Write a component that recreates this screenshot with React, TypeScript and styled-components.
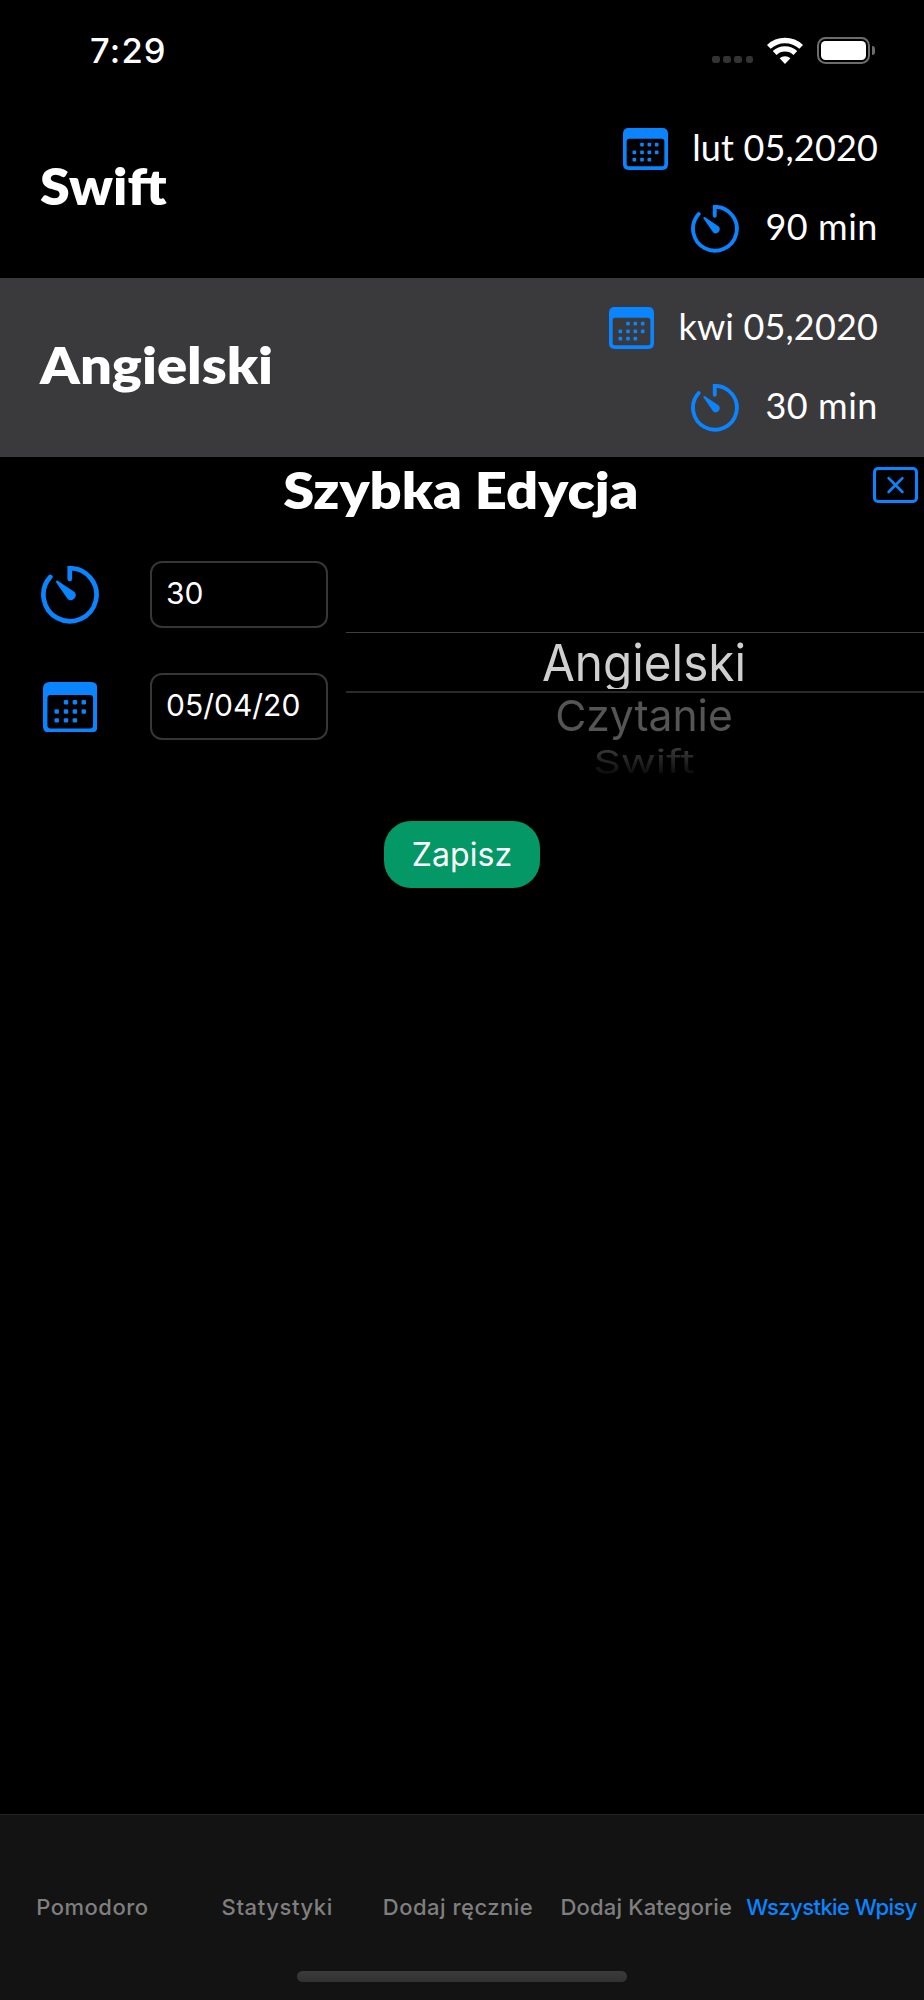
import React from "react";
import styled, { createGlobalStyle } from "styled-components";

const BLUE = "#0a84ff";
const SYSTEM = `Inter, "Liberation Sans", sans-serif`;
const ROUNDED = `Lato, "Liberation Sans", sans-serif`;

const GlobalStyle = createGlobalStyle`
  *, *::before, *::after { box-sizing: border-box; }
  body { margin: 0; background: #000; color: #fff; }
`;

const Screen = styled.div`
  width: 924px;
  height: 2000px;
  display: flex;
  flex-direction: column;
  overflow: hidden;
  background: #000;
  font-family: ${SYSTEM};
`;

const StatusBar = styled.header`
  flex: none;
  height: 99px;
  padding: 0 49px 0 90px;
  display: flex;
  justify-content: space-between;
  align-items: flex-start;
`;

const Clock = styled.time`
  margin-top: 30px;
  font-size: 34.5px;
  font-weight: 500;
  line-height: 41px;
  letter-spacing: 1.2px;
`;

const StatusIcons = styled.div`
  margin-top: 37px;
  height: 27px;
  display: flex;
  align-items: flex-end;
`;

const Signal = styled.div`
  display: flex;
  gap: 3.6px;
  margin: 0 13.5px 1px 0;
`;

const SignalDot = styled.i`
  width: 7.5px;
  height: 7.5px;
  border-radius: 2.4px;
  background: #333;
`;

const Battery = styled.div`
  width: 53px;
  height: 27px;
  margin-left: 14px;
  padding: 2px;
  border: 2px solid #6c6c6c;
  border-radius: 8.5px;
`;

const BatteryLevel = styled.div`
  height: 100%;
  border-radius: 4.5px;
  background: #fff;
`;

const BatteryNub = styled.div`
  align-self: center;
  width: 3px;
  height: 9px;
  margin-left: 2.5px;
  border-radius: 0 4px 4px 0;
  background: #6c6c6c;
`;

const Entry = styled.section<{ $selected?: boolean }>`
  flex: none;
  height: 179px;
  padding: 0 46px 0 40px;
  display: flex;
  justify-content: space-between;
  background: ${(p) => (p.$selected ? "#3a3a3c" : "#000")};
`;

const Heading = styled.h2<{ $stretch: number; $origin?: string }>`
  margin: 0;
  font: 800 51px/60px ${ROUNDED};
  white-space: nowrap;
  transform: scaleX(${(p) => p.$stretch});
  transform-origin: ${(p) => p.$origin ?? "left"} center;
`;

const EntryTitle = styled(Heading)`
  align-self: center;
  margin-bottom: 6px;
`;

const EntryDetails = styled.div`
  padding-top: 26px;
  display: flex;
  flex-direction: column;
  gap: 35px;
`;

const Detail = styled.div<{ $gap: number; $drop: number; $tracking: number }>`
  height: 44px;
  display: flex;
  justify-content: flex-end;
  align-items: flex-start;
  gap: ${(p) => p.$gap}px;
  font: 400 36px/44px ${ROUNDED};
  letter-spacing: ${(p) => p.$tracking}px;
  white-space: nowrap;

  svg { margin-top: ${(p) => p.$drop}px; }
`;

const EditorHeader = styled.div`
  flex: none;
  height: 104px;
  padding: 3px 6px 0 4px;
  display: grid;
  grid-template-columns: 45px 1fr 45px;
  justify-items: center;
  align-items: start;
`;

const CloseButton = styled.button`
  margin: 6.5px 0 0;
  padding: 0;
  border: 0;
  background: none;
  line-height: 0;
`;

const EditorBody = styled.div`
  flex: none;
  height: 260px;
  display: flex;
`;

const Fields = styled.div`
  flex: none;
  width: 346px;
  display: flex;
  flex-direction: column;
  gap: 45px;
`;

const Field = styled.label`
  height: 67px;
  padding-left: 41px;
  display: grid;
  grid-template-columns: 57.5px 178px;
  column-gap: 51.5px;
  align-items: center;
  justify-items: center;

  svg { margin-top: 1px; }
`;

const FieldInput = styled.input`
  width: 178px;
  height: 67px;
  padding: 0 14px 3px;
  border: 2px solid #363638;
  border-radius: 12px;
  outline: none;
  background: #000;
  color: #fff;
  font: 400 30px ${SYSTEM};
`;

const PickerClip = styled.div`
  flex: 1;
  min-width: 0;
  overflow: hidden;
`;

const Picker = styled.div`
  width: 596px;
  padding-top: 71px;
  text-align: center;
  white-space: nowrap;
`;

const PickerWindow = styled.div`
  height: 61px;
  border-top: 1px solid #3e3e3e;
  border-bottom: 2px solid #2a2a2a;
`;

const PickerSelected = styled.div`
  height: 56px;
  overflow: hidden;
  font-size: 51px;
  line-height: 59px;
  color: #cfcfcf;
  transform: scaleX(0.935);
`;

const PickerNext = styled.div`
  font-size: 43px;
  line-height: 45px;
  color: #555;
  transform: scaleX(0.99);
`;

const PickerLast = styled.div`
  margin-top: 1px;
  font-size: 43px;
  line-height: 44px;
  transform: scale(0.995, 0.74);
  color: transparent;
  background: linear-gradient(#3a3a3a 10%, #0c0c0c 90%);
  background-clip: text;
  -webkit-background-clip: text;
`;

const SaveButton = styled.button`
  flex: none;
  align-self: center;
  width: 156px;
  height: 67px;
  padding: 0;
  border: 0;
  border-radius: 27px;
  background: #039865;
  color: #fff;
  font: 400 32px ${SYSTEM};
  letter-spacing: 0.1px;
`;

const TabBar = styled.footer`
  flex: none;
  height: 186px;
  margin-top: auto;
  padding-top: 77px;
  border-top: 1px solid #242424;
  background: #131313;
  display: flex;
  flex-direction: column;
  align-items: center;
`;

const Tabs = styled.nav`
  width: 100%;
  display: grid;
  grid-template-columns: repeat(5, 1fr);
`;

const Tab = styled.span<{ $active?: boolean; $tracking: number; $inset?: number }>`
  padding-right: ${(p) => p.$inset ?? 0}px;
  text-align: center;
  white-space: nowrap;
  font-size: 22px;
  font-weight: 500;
  line-height: 30px;
  letter-spacing: ${(p) => p.$tracking}px;
  color: ${(p) => (p.$active ? BLUE : "#7f7f7f")};
`;

const HomeIndicator = styled.div`
  width: 330px;
  height: 11px;
  margin-top: 49px;
  border-radius: 6px;
  background: linear-gradient(#3b3b3b, #313131);
`;

const WifiIcon = () => (
  <svg width="36" height="27" viewBox="0 0 36 27" fill="none" stroke="#fff" strokeWidth="5.4">
    <path d="M1.8 9.9A23.6 23.6 0 0 1 34.2 9.9" />
    <path d="M7.6 16.05A15.1 15.1 0 0 1 28.4 16.05" />
    <path d="M12.6 21.35A7.8 7.8 0 0 1 23.4 21.35L18 26.9Z" fill="#fff" stroke="none" />
  </svg>
);

const TimerIcon = ({ size }: { size: number }) => (
  <svg width={size} height={size} viewBox="0 0 142 142" fill="none">
    <path
      d="M71 32V5.5A65.5 65.5 0 1 1 23 27"
      stroke={BLUE}
      strokeWidth="11.5"
      strokeLinecap="round"
      strokeLinejoin="miter"
    />
    <path d="M42.1 36.8L82.7 64.5A12 12 0 0 1 66.5 82L37.9 41.2A3 3 0 0 1 42.1 36.8Z" fill={BLUE} />
  </svg>
);

const DOTS: [number, number][] = [
  [57, 50], [79, 50], [101, 50],
  [34, 73], [57, 73], [79, 73], [101, 73],
  [34, 95], [57, 95], [79, 95],
];

const CalendarIcon = ({ width }: { width: number }) => (
  <svg width={width} height={(width * 126) / 135} viewBox="0 0 135 126" fill={BLUE}>
    <path
      fillRule="evenodd"
      d="M17 0H118Q135 0 135 17V109Q135 126 118 126H17Q0 126 0 109V17Q0 0 17 0ZM19 32Q11 32 11 40V107Q11 115 19 115H116Q124 115 124 107V40Q124 32 116 32Z"
    />
    {DOTS.map(([x, y]) => (
      <rect key={`${x}-${y}`} x={x - 5.5} y={y - 5.5} width="11" height="11" rx="3" />
    ))}
  </svg>
);

const CloseIcon = () => (
  <svg width="45" height="36" viewBox="0 0 45 36" fill="none" stroke={BLUE} strokeWidth="3">
    <rect x="1.5" y="1.5" width="42" height="33" rx="3.5" />
    <path d="M15.6 11.2L29.4 25M29.4 11.2L15.6 25" strokeWidth="2.6" strokeLinecap="round" />
  </svg>
);

const entries = [
  { title: "Swift", stretch: 1.055, date: "lut 05,2020", tracking: 0.15, duration: "90 min", selected: false },
  { title: "Angielski", stretch: 1.1, date: "kwi 05,2020", tracking: 0.15, duration: "30 min", selected: true },
];

const tabs = [
  { label: "Pomodoro", tracking: 0.49 },
  { label: "Statystyki", tracking: 0.59 },
  { label: "Dodaj ręcznie", tracking: 0.49, inset: 8 },
  { label: "Dodaj Kategorie", tracking: 0.2, inset: 1 },
  { label: "Wszystkie Wpisy", tracking: -0.57, active: true },
];

export default function App() {
  return (
    <Screen>
      <GlobalStyle />
      <StatusBar>
        <Clock>7:29</Clock>
        <StatusIcons>
          <Signal>
            <SignalDot />
            <SignalDot />
            <SignalDot />
            <SignalDot />
          </Signal>
          <WifiIcon />
          <Battery>
            <BatteryLevel />
          </Battery>
          <BatteryNub />
        </StatusIcons>
      </StatusBar>

      {entries.map((e) => (
        <Entry key={e.title} $selected={e.selected}>
          <EntryTitle $stretch={e.stretch}>{e.title}</EntryTitle>
          <EntryDetails>
            <Detail $gap={24} $drop={3} $tracking={e.tracking}>
              <CalendarIcon width={45} />
              <span>{e.date}</span>
            </Detail>
            <Detail $gap={26.5} $drop={1} $tracking={0.55}>
              <TimerIcon size={47.5} />
              <span>{e.duration}</span>
            </Detail>
          </EntryDetails>
        </Entry>
      ))}

      <EditorHeader>
        <span />
        <Heading $stretch={1.098} $origin="center">Szybka Edycja</Heading>
        <CloseButton aria-label="Zamknij">
          <CloseIcon />
        </CloseButton>
      </EditorHeader>

      <EditorBody>
        <Fields>
          <Field>
            <TimerIcon size={57.5} />
            <FieldInput defaultValue="30" />
          </Field>
          <Field>
            <CalendarIcon width={54.5} />
            <FieldInput defaultValue="05/04/20" />
          </Field>
        </Fields>
        <PickerClip>
          <Picker>
            <PickerWindow>
              <PickerSelected>Angielski</PickerSelected>
            </PickerWindow>
            <PickerNext>Czytanie</PickerNext>
            <PickerLast>Swift</PickerLast>
          </Picker>
        </PickerClip>
      </EditorBody>

      <SaveButton>Zapisz</SaveButton>

      <TabBar>
        <Tabs>
          {tabs.map((t) => (
            <Tab key={t.label} $active={t.active} $tracking={t.tracking} $inset={t.inset}>
              {t.label}
            </Tab>
          ))}
        </Tabs>
        <HomeIndicator />
      </TabBar>
    </Screen>
  );
}
